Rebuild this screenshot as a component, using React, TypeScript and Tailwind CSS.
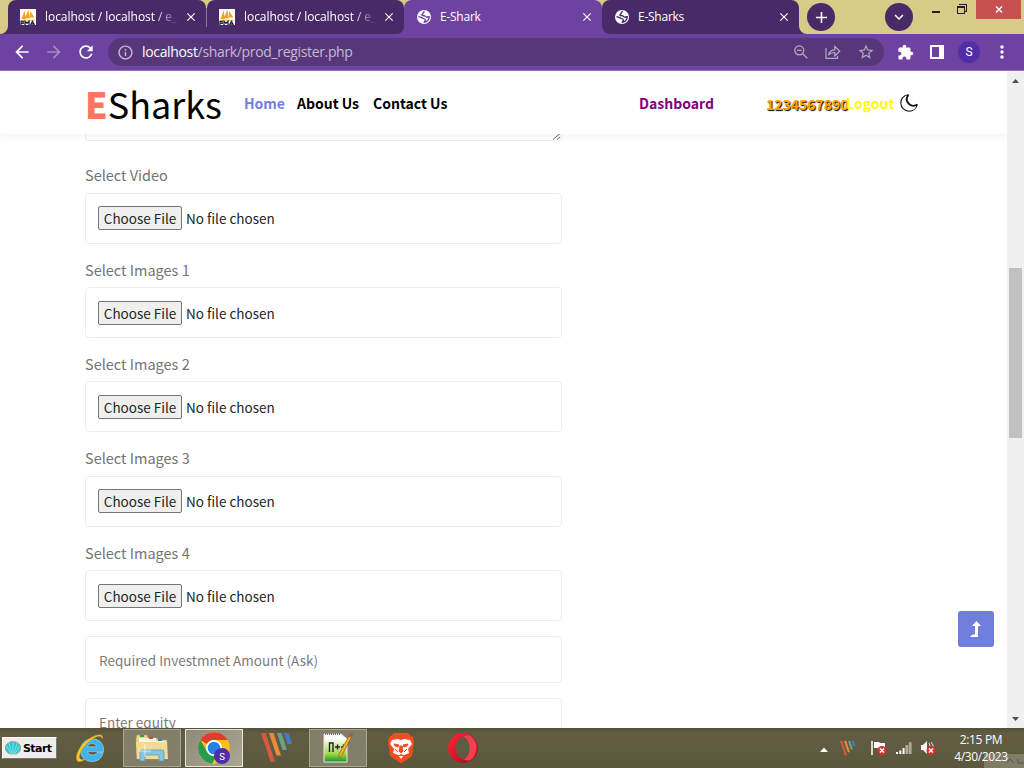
import React from "react";
import { MdArrowBack, MdArrowForward, MdRefresh, MdInfoOutline, MdStarBorder, MdExtension, MdMoreVert, MdClose, MdAdd, MdExpandMore } from "react-icons/md";

const SOURCE = "font-['Noto_Sans_CJK_SC','Noto_Sans_CJK_JP',sans-serif]";
const CHROME = "font-['Open_Sans','Noto_Sans',sans-serif]";

function PmaIcon() {
  return (
    <svg viewBox="0 0 16 16" className="h-4 w-4 shrink-0">
      <rect width="16" height="16" fill="#fff" />
      <path d="M1.5 10 4.5 1.5 6 10zM5 9 8.5.5l1 9zM9.5 8.5l.5-6.500 4.500 6.500z" fill="#f6a21d" />
      <path d="M.5 10.700h15l-.7 1H1z" fill="#f0b050" />
      <path d="M1 16v-3.700h2.200v2H1M5 16v-3.700l2 2 2-2V16M10.500 16l2-3.700 2 3.700M11 15h3" fill="none" stroke="#24243e" strokeWidth="1.300" />
    </svg>
  );
}

function GlobeIcon() {
  return (
    <svg viewBox="0 0 14 14" className="h-3.5 w-3.5 shrink-0">
      <circle cx="7" cy="7" r="7" fill="#fff" />
      <path d="M7.600 1.300c-.8.500-1.500 1-1.400 1.800.1 1-1.100.8-1.300 1.700-.1.900 1 .9 2.300.9 1.200 0 1.100 1.100 2.100 1.400.9.300 1.700-.5 2.900-.3-.1 2.900-2.100 5.100-4.900 5.500.1-1.100 1.200-1.200 1.100-2.300-.1-.9-.8-1.300-1.700-1.400C5.200 8.500 4.800 7.200 1.400 6.600" fill="none" stroke="currentColor" strokeWidth="1.400" />
    </svg>
  );
}

function Tab({ title, kind, active, className, fade }: { title: string; kind: "pma" | "globe"; active?: boolean; className: string; fade?: boolean }) {
  return (
    <div className={`flex h-[34px] items-center ${kind === "pma" ? "pl-3" : "pl-[13px]"} pr-2 ${active ? "bg-[#6e42a1] text-[#6e42a1]" : "bg-[#482a68] text-[#482a68]"} ${className}`}>
      {kind === "pma" ? <PmaIcon /> : <GlobeIcon />}
      <div className={`ml-[9px] min-w-0 flex-1 overflow-hidden whitespace-nowrap text-[12px] leading-4 text-white ${fade ? "tracking-[-0.06px] [mask-image:linear-gradient(90deg,#000_82%,transparent)]" : "tracking-[-0.25px]"}`}>{title}</div>
      <MdClose className="ml-[5px] h-3.5 w-3.5 shrink-0 text-white" />
    </div>
  );
}

function BrowserChrome() {
  return (
    <div className={CHROME}>
      <div className="flex h-[34px] bg-[#d8ca87]">
        <div className="flex bg-[#482a68]">
          <div className="h-full w-2 rounded-br-lg bg-[#d8ca87]" />
        </div>
        <div className="flex w-[396px] bg-[linear-gradient(#d8ca87_50%,#6e42a1_50%)]">
          <div className="flex w-[396px] rounded-br-lg bg-[linear-gradient(#d8ca87_50%,#482a68_50%)]">
            <Tab title="localhost / localhost / e_sharks" kind="pma" fade className="w-[198px] rounded-t-lg" />
            <div className="mt-[8px] h-[19px] w-px bg-[#8a7798]" />
            <Tab title="localhost / localhost / e_sharks" kind="pma" fade className="w-[197px] rounded-t-lg rounded-br-lg" />
          </div>
        </div>
        <Tab title="E-Shark" kind="globe" active className="w-[198px] rounded-t-lg" />
        <div className="bg-[linear-gradient(#d8ca87_50%,#6e42a1_50%)]">
          <Tab title="E-Sharks" kind="globe" className="w-[197px] rounded-t-lg rounded-bl-lg" />
        </div>
        <div className="flex flex-1 bg-[#482a68]">
          <div className="flex flex-1 rounded-bl-lg bg-[#d8ca87]">
            <div className="ml-2 mt-[3px] flex h-7 w-7 items-center justify-center rounded-full bg-[#482a68]">
              <MdAdd className="h-[19px] w-[19px] text-white" />
            </div>
            <div className="ml-[50px] mt-[3px] flex h-7 w-7 items-center justify-center rounded-full bg-[#482a68]">
              <MdExpandMore className="h-[18px] w-[18px] text-white" />
            </div>
            <div className="ml-[19px] mt-[11px] h-[2px] w-2 bg-[#222]" />
            <svg viewBox="0 0 10 10" className="ml-[17px] mt-1 h-2.5 w-2.5" shapeRendering="crispEdges">
              <path d="M2.500 0v.5h7v7H8M.5 2.500h7v7h-7zM0 3.500h7" fill="none" stroke="#222" />
            </svg>
            <div className="ml-[9px] flex h-[19px] w-[45px] items-center justify-center bg-[#c75050]">
              <svg viewBox="0 0 8 8" className="h-[7px] w-2"><path d="M.5.5l7 7m0-7l-7 7" stroke="#fff" strokeWidth="1.500" /></svg>
            </div>
          </div>
        </div>
      </div>
      <div className="flex h-9 items-center bg-[#6e42a1] text-white">
        <MdArrowBack className="ml-3 h-5 w-5" />
        <MdArrowForward className="ml-3 h-5 w-5 text-[#a78cc6]" />
        <MdRefresh className="ml-3 h-5 w-5" />
        <div className="ml-3 flex h-7 w-[776px] items-center rounded-full bg-[#573779]">
          <MdInfoOutline className="ml-[9px] h-[17px] w-[17px] text-[#c7bcd2]" />
          <div className="ml-2 flex-1 whitespace-nowrap text-[14px] leading-5 tracking-[-0.34px] text-[#c5b9d1]">
            <span className="text-white">localhost</span>/shark/prod_register.php
          </div>
          <svg viewBox="0 0 14 14" className="h-3.5 w-3.5" fill="none" stroke="#b5a8c2" strokeWidth="1.300">
            <circle cx="5.300" cy="5.300" r="4.500" /><path d="M8.500 8.500l4.800 4.800M3 5.300h4.600" />
          </svg>
          <svg viewBox="0 0 16 14" className="ml-[17px] h-3.5 w-4" fill="none" stroke="#b5a8c2" strokeWidth="1.200">
            <path d="M1 3v10.400h11.500v-2.600M3.500 10c.7-3.500 2.700-5 6.300-5.200V1.500l5 4.800-5 4.500V7.500C6.800 7.500 5 8.200 3.500 10z" />
          </svg>
          <MdStarBorder className="ml-4 mr-[9px] h-[18px] w-[18px] text-[#b5a8c2]" />
        </div>
        <MdExtension className="ml-[13px] h-[17px] w-[17px]" />
        <svg viewBox="0 0 14 14" className="ml-[16px] h-3.5 w-3.5"><path d="M0 0h14v14H0zM2 2v10h7V2z" fill="#fff" fillRule="evenodd" /></svg>
        <div className="ml-[14px] flex h-[22px] w-[22px] items-center justify-center rounded-full bg-[#512da8] font-['Roboto',sans-serif] text-[12px] leading-none">S</div>
        <MdMoreVert className="ml-[12px] h-5 w-5" />
      </div>
      <div className="h-px bg-[#916fb9]" />
    </div>
  );
}

function SiteHeader() {
  return (
    <header className="relative z-10 flex h-[63px] shrink-0 items-center whitespace-nowrap bg-white pl-[85px] text-[14px] font-bold leading-6 text-black shadow-[0_3px_6px_rgba(0,0,0,0.04)]">
      <div className="flex w-[159px] items-center text-[36px] font-normal leading-[48px] text-black">
        <span className="font-black text-[#ff7361]">E</span>
        <span>Sharks</span>
      </div>
      <div className="w-[53px] text-[#707fdd]">Home</div>
      <div className="w-[76px]">About Us</div>
      <div className="w-[266px]">Contact Us</div>
      <div className="w-[127px] text-[purple]">Dashboard</div>
      <div className="mt-0.5 w-[80px] text-[orange] [text-shadow:1px_1px_1px_#000]">1234567890</div>
      <div className="w-[54px] text-[#ff0]">Logout</div>
      <svg viewBox="0 0 18 18" className="h-[18px] w-[18px]" fill="none" stroke="#111">
        <path d="M8.500.8C3.500 1.300.6 5 .8 9.200c.2 4.500 3.800 8 8.200 8 4 0 7.500-2.600 8.300-6.700" strokeWidth="1.100" />
        <path d="M8.500.8C6.600 3 6.200 6 7.800 8.600c2 3.300 5.800 4 9.500 1.900" strokeWidth="1.900" />
      </svg>
    </header>
  );
}

function FileField({ label }: { label: string }) {
  return (
    <div className="h-[94.33px] w-[477px]">
      <div className="h-[28.33px] pt-[0px] text-[14.500px] leading-[22px] text-[#747474]">{label}</div>
      <div className="flex h-[51px] items-center rounded-[4px] border border-[#ededed] pl-3 text-[13.500px] leading-5 text-[#212529]">
        <button className="flex h-6 w-[84px] items-center justify-center whitespace-nowrap rounded-[2px] border border-[#767676] bg-[#efefef]">Choose File</button>
        <span className="ml-[4px] whitespace-nowrap">No file chosen</span>
      </div>
    </div>
  );
}

function Page() {
  return (
    <div className="relative flex h-[657px]">
      <main className={`flex h-full flex-1 flex-col overflow-hidden bg-white ${SOURCE}`}>
        <SiteHeader />
        <div className="ml-[85px] flex h-[594px] flex-col overflow-hidden">
          <div className="flex h-[7px] w-[477px] shrink-0 items-end justify-end rounded-b-[4px] border-x border-b border-[#ededed]">
            <svg viewBox="0 0 9 7" className="h-[7px] w-[9px]"><path d="M1 6.500 8 .5M5 6.500 8 4" stroke="#666" /></svg>
          </div>
          <div className="mt-[23.400px] shrink-0">
            {["Select Video", "Select Images 1", "Select Images 2", "Select Images 3", "Select Images 4"].map((label) => (
              <FileField key={label} label={label} />
            ))}
          </div>
          <div className="flex h-[47px] w-[477px] shrink-0 items-center rounded-[4px] border border-[#ededed] pl-[13px] text-[13.500px] leading-5 text-[#7b7b7b]">Required Investmnet Amount (Ask)</div>
          <div className="mt-[15px] flex h-[47px] w-[477px] shrink-0 items-center rounded-[4px] border border-[#ededed] pl-[13px] text-[13.500px] leading-5 text-[#7b7b7b]">Enter equity</div>
        </div>
      </main>
      <div className="flex w-[17px] flex-col items-center justify-between bg-[#f0f0f0]">
        <svg viewBox="0 0 7 4" className="mt-[8px] h-1 w-[7px]"><path d="M0 4 3.500 0 7 4z" fill="#505050" /></svg>
        <div className="mb-[94px] h-[170px] w-[13px] bg-[#c1c1c1]" />
        <svg viewBox="0 0 7 4" className="mb-[7px] h-1 w-[7px]"><path d="M0 0 3.500 4 7 0z" fill="#505050" /></svg>
      </div>
      <button className="absolute bottom-[81px] right-[30px] z-20 flex h-9 w-9 items-center justify-center rounded-[3px] bg-[#707fdd]">
        <svg viewBox="0 0 12 16" className="h-4 w-3"><path d="M6.500 0 11 5H8v11H0l2.500-2.500H5V5H2z" fill="#fff" /></svg>
      </button>
    </div>
  );
}

function Stripes({ className }: { className: string }) {
  return (
    <svg viewBox="0 0 32 30" className={className}>
      <path d="M0 0h4.500L14 28.500H9.500z" fill="#d9593f" />
      <path d="M8 0h4.500L20 22.500h-4.500z" fill="#e98b3a" />
      <path d="M16 0h4.500L26 17h-4.500z" fill="#6aa08a" />
      <path d="M23 0h4.500L31 11h-4.500z" fill="#3f7fbd" />
    </svg>
  );
}

function ErrorBadge() {
  return (
    <>
      <circle cx="11" cy="10.500" r="4.500" fill="#e02c2c" />
      <path d="M9 8.500l4 4m0-4l-4 4" stroke="#fff" strokeWidth="1.500" />
    </>
  );
}

function Taskbar() {
  return (
    <div className="relative flex h-10 items-center overflow-hidden bg-[linear-gradient(#555139,#625d42_15%,#5b573d)]">
      <div className="ml-0.5 flex h-[22px] w-[55px] items-center whitespace-nowrap border border-b-[#777] border-l-white border-r-[#777] border-t-white bg-[#efeded] pl-[2px] font-['DejaVu_Sans',sans-serif] text-[11px] font-bold leading-none tracking-[-0.550px] text-black">
        <svg viewBox="0 0 16 14" className="mr-0.5 h-3.5 w-4 shrink-0">
          <path d="M5 13C1 11 0 9 .5 5 2 2 5 .5 8 .5S14 2 15.500 5c.5 4-.5 6-4.500 8z" fill="#2fc6d2" stroke="#b58d5b" strokeWidth=".7" />
          <path d="M8 13V1M7 13 4 2M9 13l3-11M6 13 1.500 5M10 13l4.500-8" stroke="#9ceef0" strokeWidth=".7" />
        </svg>
        Start
      </div>
      <svg viewBox="0 0 30 30" className="ml-[18px] h-[30px] w-[30px]">
        <path d="M22 19.500c-1.300 3-7.700 4-9.600-.9h16.100c.9-7.300-3.500-12.600-10.900-12.600-7 0-12 4.500-12 11.300 0 7 4.500 11.200 11.700 11.200 5.500 0 9.600-3.200 10.900-9zM12.400 13.800c.9-4.300 8.500-4.300 9 0z" fill="#41b4ec" stroke="#a1e0fb" strokeWidth=".6" />
        <path d="M27.500 6C28.500.5 24 .8 17 4 7 9 .5 20 1.500 26c.8 4.500 6 2.500 10-.5-5 2-7.500 1-7-2.500C5.500 16 15 5.500 22.500 3.500c3-.8 4.500.2 5 2.500z" fill="#f6c72a" stroke="#c8961d" strokeWidth=".5" />
      </svg>
      <div className="ml-[18px] flex h-[38px] w-[58px] items-center justify-center border border-[#aaa790] bg-[#827e68]">
        <svg viewBox="0 0 34 30" className="h-[30px] w-[34px]">
          <path d="M1 5 2 2h10l1 3h9l1 2h9v19H2z" fill="#ead58c" stroke="#b99f52" strokeWidth=".6" />
          <path d="M4 5h17v3h10v4H4z" fill="#faf6df" />
          <path d="M5 2h4v2H5z" fill="#25a744" /><path d="M14 4h4v2h-4z" fill="#cf4d32" /><path d="M23 6h4v2h-4z" fill="#3085c8" />
          <path d="M1 9h31l1 17H2z" fill="#f0dc94" />
          <path d="M5 28V19q0-2 2-2h20q2 0 2 2v9h-5v-6H10v6z" fill="#87c7e6" stroke="#4d91b7" strokeWidth=".7" />
          <path d="M10 11v13M4 18h12" stroke="#fff" strokeWidth=".7" />
        </svg>
      </div>
      <div className="ml-1 flex h-[38px] w-[58px] items-center justify-center border border-[#e7e5dc] bg-[linear-gradient(135deg,#8f8b78,#aaa694)]">
        <svg viewBox="0 0 32 32" className="h-8 w-8">
          <circle cx="16" cy="16" r="15.800" fill="#fbc116" />
          <path d="M2.300 8.100A15.800 15.800 0 0 1 29.700 8.100H16A8 8 0 0 0 9 12z" fill="#df3d2e" />
          <path d="M2.300 8.100 9.300 20A8 8 0 0 0 19 23l-5 8.700A15.800 15.800 0 0 1 2.300 8.100z" fill="#259b4b" />
          <circle cx="16" cy="16" r="8" fill="#fff" /><circle cx="16" cy="16" r="6.300" fill="#2880e8" />
          <circle cx="24" cy="24" r="8" fill="#512da8" />
          <text x="24" y="27.600" textAnchor="middle" fontFamily="Roboto" fontSize="9.500" fill="#fff">S</text>
        </svg>
      </div>
      <Stripes className="ml-[18px] h-[30px] w-8" />
      <div className="ml-4 flex h-[38px] w-[58px] items-center justify-center border border-[#aaa790] bg-[#827e68]">
        <svg viewBox="0 0 32 32" className="h-8 w-8">
          <defs><linearGradient id="np" x2="0" y2="1"><stop offset=".15" stopColor="#fff" /><stop offset=".7" stopColor="#a1d84a" /><stop offset="1" stopColor="#18922a" /></linearGradient></defs>
          <path d="M2 2h17l6 5v23H2z" fill="url(#np)" stroke="#e6e9df" />
          <path d="M3 2h15" stroke="#6d7480" strokeWidth="2" strokeDasharray="1 1" />
          <path d="M7.500 20v-9h3.500v9M13 15h5M15.500 12.500v5M19 15h5M21.500 12.500v5" stroke="#222" strokeWidth="1.400" fill="none" />
          <path d="M27 4 29.500 5 19.500 24 17 26v-4z" fill="#f3b329" stroke="#8a621c" strokeWidth=".7" />
          <path d="m27 4 1-2q2-1 3 1l-1.500 2z" fill="#b64c53" />
        </svg>
      </div>
      <svg viewBox="0 0 28 32" className="ml-5 h-8 w-7">
        <path d="M7 1h14l3 3 2 1 1 5-2 14-11 7.500L3 24 1 10l1-5 2-1z" fill="#f64a20" />
        <path d="m5 8 6-1 3 1 3-1 6 1 2 4-4 5 1 4-5 2-3 4-3-4-5-2 1-4-4-5z" fill="#fff" />
        <path d="m7 12 5 1-1 2-3-1zM21 12l-5 1 1 2 3-1zM13 14h2l1 5-2 2-2-2zM8 17l3 3M20 17l-3 3M11 24l3-1.500 3 1.500" fill="#f64a20" stroke="#f64a20" />
      </svg>
      <svg viewBox="0 0 30 30" className="ml-[33px] h-[30px] w-[30px]">
        <defs><linearGradient id="op" x2="1" y2="1"><stop stopColor="#ff2839" /><stop offset="1" stopColor="#a70818" /></linearGradient></defs>
        <path d="M15 0a15 15 0 1 0 0 30 15 15 0 1 0 0-30zM15 4c4 0 6.500 5 6.500 11S19 26 15 26 8 21 8 15 11 4 15 4z" fill="url(#op)" fillRule="evenodd" />
        <path d="M15 4c3-2 5-2 7.500-1A15 15 0 0 1 22.500 27c-2.500 1-5 .5-7.500-1 4 0 6.500-5 6.500-11S19 4 15 4z" fill="#ed4350" />
      </svg>
      <div className="flex-1" />
      <svg viewBox="0 0 8 5" className="mr-[12px] mt-0.5 h-[5px] w-2"><path d="m0 5 4-4.500L8 5z" fill="#fff" /></svg>
      <Stripes className="mr-[15px] h-[15px] w-4" />
      <svg viewBox="0 0 16 16" className="mr-[9px] h-4 w-4"><path d="M1 1v14" stroke="#fff" strokeWidth="1.500" /><path d="M3 2h5l1 1h5v7H8L7 8H3z" fill="#fff" /><ErrorBadge /></svg>
      <svg viewBox="0 0 16 12" className="mr-2 h-3 w-4"><path d="M0 10h2v2H0zM3.300 8.500h2V12h-2zM6.600 6h2v6h-2z" fill="#fff" /><path d="M9.900 3.500h2V12h-2zM13.200.5h2V12h-2z" fill="#aaa894" stroke="#ccc9b8" strokeWidth=".5" /></svg>
      <svg viewBox="0 0 16 16" className="mr-[16px] h-4 w-4"><path d="M1 5h2l4-4v13l-4-4H1z" fill="#fff" /><path d="M9 3q3 4 0 8M11 2q3 3 2 6" stroke="#ddd" fill="none" /><ErrorBadge /></svg>
      <div className={`relative z-10 mr-3.5 flex w-[58px] flex-col items-center whitespace-nowrap text-center text-[12px] leading-[17px] tracking-[-0.35px] text-white ${CHROME}`}>
        <span>2:15 PM</span>
        <span>4/30/2023</span>
      </div>
      <div className="absolute bottom-0 right-0 flex h-3.5 w-10 items-center justify-end bg-[#807c65]">
        <svg viewBox="0 0 18 6" className="h-1.5 w-[18px]"><path d="m1 5 3-4 4 4M12 1v4h6" fill="none" stroke="#555" /></svg>
      </div>
    </div>
  );
}

export default function App() {
  return (
    <div className="flex h-[768px] w-[1024px] flex-col overflow-hidden">
      <BrowserChrome />
      <Page />
      <Taskbar />
    </div>
  );
}
